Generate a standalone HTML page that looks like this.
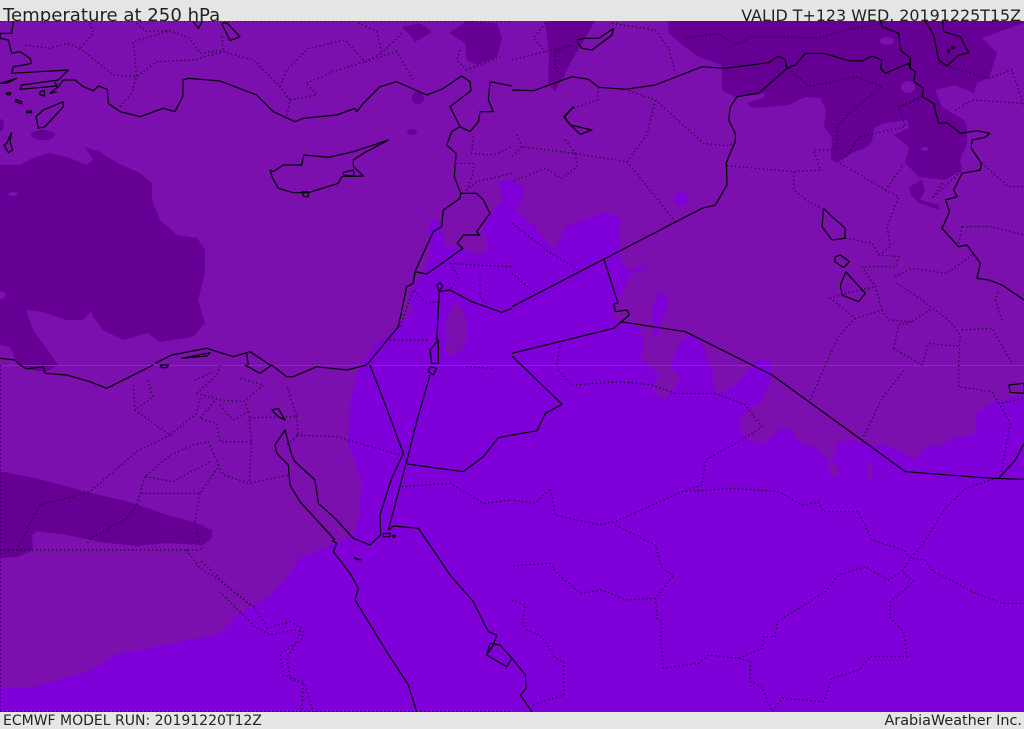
<!DOCTYPE html>
<html><head><meta charset="utf-8"><style>
html,body{margin:0;padding:0;width:1024px;height:729px;overflow:hidden;background:#e5e5e5}
.t{position:absolute;font-family:"DejaVu Sans",sans-serif;color:#222;white-space:nowrap;line-height:1}
svg{position:absolute;left:0;top:0}
polyline{fill:none;stroke:#000;stroke-width:1.2;stroke-linejoin:round;vector-effect:non-scaling-stroke}
.d polyline{stroke:#14002a;stroke-width:1.2;stroke-dasharray:1.2 2.8;stroke-linecap:butt}
</style></head><body>
<div style="position:absolute;left:0;top:0;width:1024px;height:21px;overflow:hidden">
<div class="t" style="left:3px;top:7px;font-size:18.1px">Temperature at 250 hPa</div>
<div class="t" style="right:3px;top:8px;font-size:15.9px">VALID T+123 WED. 20191225T15Z</div>
</div>
<svg width="1024" height="729" viewBox="0 0 1024 729">
<defs><clipPath id="c"><rect x="0" y="21" width="1024" height="691"/></clipPath></defs>
<g clip-path="url(#c)">
<rect x="0" y="21" width="1024" height="691" fill="#7b10ae"/>
<g fill="#660094">
<path d="M0 165L20 165L33 158L50 153L70 158L87 165L93 160L85 147L100 152L117 163L140 173L152 183L152 200L160 220L177 235L197 238L205 250L205 273L198 300L205 323L193 337L160 342L147 333L123 340L103 330L93 317L91 312L83 320L67 320L43 312L26 310L33 330L58 365L45 372L33 370L20 365L15 358L10 347L0 345Z"/>
<path d="M0 471L43 480L87 492L133 503L167 515L197 523L212 530L212 538L203 545L167 543L137 546L100 542L67 535L37 531L32 535L33 550L17 557L0 558Z"/>
<path d="M668 21L669 33L685 47L699 57L722 65L722 90L735 97L765 93L764 98L747 103L752 108L789 105L805 97L820 98L826 110L824 127L832 138L831 160L837 163L852 153L865 148L872 142L874 128L885 123L907 120L909 128L894 135L909 147L905 163L919 177L945 180L962 170L960 160L967 143L967 127L964 120L942 107L935 90L955 85L974 93L977 83L989 78L997 53L982 38L995 33L1024 23L1024 21Z"/>
<path d="M909 187L922 180L925 190L920 200L939 205L939 210L919 203L911 195Z"/>
<path d="M545 21L595 21L584 40L572 60L564 75L555 91L548 83L549 53Z"/>
<path d="M402 27L420 23L432 32L415 42L410 35Z"/>
<path d="M449 33L467 21L497 23L502 38L497 57L477 65L467 60L465 43Z"/>
<ellipse cx="418" cy="98" rx="6" ry="6"/><ellipse cx="412" cy="132" rx="5" ry="3"/><ellipse cx="43" cy="135" rx="12" ry="5"/>
<ellipse cx="1" cy="125" rx="3" ry="6"/>
</g>
<g fill="#7b10ae">
<ellipse cx="887" cy="41" rx="7" ry="4"/><ellipse cx="908" cy="87" rx="7" ry="6"/><ellipse cx="925" cy="149" rx="4" ry="2"/><ellipse cx="13" cy="194" rx="5" ry="2"/><ellipse cx="1" cy="295" rx="5" ry="4"/>
</g>
<path fill="#7f00d8" d="M0 688L33 687L67 677L90 671L113 655L150 648L187 640L217 635L227 625L240 613L267 598L283 582L300 558L330 545L353 537L359 518L362 482L348 445L350 405L358 368L360 365L377 343L397 328L413 310L408 293L425 273L430 253L430 220L438 220L445 245L480 255L489 248L482 230L490 213L503 200L498 182L512 180L522 187L524 193L517 207L517 213L534 225L545 240L554 249L560 240L565 227L589 218L605 212L619 217L620 260L629 270L652 265L629 275L625 287L614 310L612 317L619 322L640 327L644 343L640 357L649 365L659 375L652 390L664 400L677 385L680 378L669 365L670 365L682 340L692 335L702 343L709 365L712 365L714 390L725 393L742 378L752 365L762 358L772 362L770 385L760 402L742 415L740 425L747 440L765 443L779 430L790 428L799 442L815 447L830 460L829 473L835 477L840 470L832 460L837 443L849 440L875 445L892 447L914 459L927 447L942 445L955 438L977 433L975 415L992 402L1024 395L1024 712L0 712Z"/>
<path fill="#7b10ae" d="M445 322L455 302L463 310L467 330L465 347L452 356L445 350Z"/>
<path fill="#7b10ae" d="M867 463L870 461L873 470L872 480L869 478Z"/>
<path fill="#7f00d8" d="M652 310L658 293L665 293L668 305L660 322L658 340L654 335Z"/>
<circle cx="681" cy="199" r="7" fill="#7f00d8"/>
<rect x="0" y="365" width="1024" height="1" fill="#8c2fc4" opacity=".8"/>

<g transform="scale(.33333)">
<polyline points="40,63 35,100 0,100 0,115 25,120 35,160 60,155 90,175 95,190 70,195 40,200 35,220 205,210 175,240 65,255 60,268 170,258 165,245"/>
<polyline points="190,240 225,240 250,260 280,272 295,258 322,268 325,310 360,335 400,345 420,350 490,325 525,335 548,290 550,240 565,235 660,243 770,285 820,335 885,365 910,355 1010,345 1065,325 1070,335 1090,310 1140,260 1190,245 1280,285 1325,268 1385,228 1410,245 1413,272 1350,320 1380,380 1355,395 1340,435 1368,460 1363,530 1382,580 1380,595 1330,630 1325,680 1300,695 1245,815 1240,850 1220,860 1195,980 1100,1095"/>
<polyline points="190,240 175,260 150,280 170,275"/>
<polyline points="0,250 50,235 20,250 0,250"/>
<polyline points="20,278 32,278 30,284 20,284 20,278"/>
<polyline points="47,298 65,305 65,312 47,305 47,298"/>
<polyline points="80,333 95,333 95,338 80,338 80,333"/>
<polyline points="120,275 133,272 133,288 120,284 120,275"/>
<polyline points="190,305 130,330 108,350 115,385 135,380 190,320 190,305"/>
<polyline points="35,397 20,430 12,435 25,458 38,450 30,425 35,397"/>
<polyline points="665,70 680,68 720,110 690,122 665,70"/>
<polyline points="580,65 595,85 607,65"/>
<polyline points="810,510 820,515 850,495 905,495 912,465 985,472 1060,455 1165,420 1090,460 1060,480 1060,500 1090,528 1025,530 1015,550 925,578 880,578 835,565 818,535 810,510"/>
<polyline points="905,575 925,575 925,590 912,590 905,575"/>
<polyline points="1030,517 1060,510 1062,528 1030,525 1030,517"/>
<polyline points="1470,245 1536,258"/>
<polyline points="1470,245 1465,300 1480,335 1440,335 1435,365 1410,395 1380,380"/>
<polyline points="1382,580 1430,580 1450,600 1470,640 1430,695 1440,705 1390,705 1372,730 1388,745 1340,780 1280,822 1245,815"/>
<polyline points="1318,875 1350,870 1415,905 1505,937 1536,925"/>
<polyline points="1318,875 1310,855 1320,848 1328,858 1318,875 1310,1020"/>
<polyline points="1290,1050 1315,1020 1315,1090 1295,1090 1290,1050"/>
<polyline points="465,1090 515,1065 620,1045 700,1070 750,1055 810,1095"/>
<polyline points="545,1075 630,1058 620,1068 545,1075"/>
<polyline points="740,1060 745,1095"/>
<polyline points="60,1095 45,1080 0,1075"/>
</g>

<g transform="translate(512 0) scale(.33333)">
<polyline points="0,270 65,272 180,230 230,238 260,262 340,268 430,255 570,200 640,205 770,188 800,168 820,180 825,205 850,195 880,160 935,160 1010,182 1050,183 1080,168 1110,180 1105,205 1120,220 1190,190 1195,205 1210,215 1205,245 1235,265 1230,290 1265,310 1280,370 1305,368 1345,400 1395,392 1433,400 1420,412 1380,420 1378,445 1408,490 1405,510 1350,520 1325,570 1335,590 1300,600 1313,635 1290,685 1340,740 1365,735 1405,790 1395,835 1430,840 1470,855 1536,900"/>
<polyline points="825,205 740,280 675,290 655,320 650,360 670,400 670,425 650,470 643,490 645,555 610,615 570,625 0,920"/>
<polyline points="275,775 318,910 305,912 310,935 345,930 352,945 305,985 0,1060"/>
<polyline points="325,965 520,995 720,1095"/>
<polyline points="0,1068 28,1095"/>
<polyline points="1105,63 1110,80 1160,100 1165,150 1195,175 1195,205"/>
<polyline points="1240,63 1265,105 1280,180 1305,198 1340,165 1370,158 1345,110 1295,95 1292,63"/>
<polyline points="1305,150 1312,150 1310,160 1305,150"/>
<polyline points="1318,138 1330,143 1320,146 1318,138"/>
<polyline points="195,120 220,115 260,115 305,85 300,105 240,150 210,145 195,125"/>
<polyline points="185,320 158,350 175,375 240,390 205,403 170,370 155,350 185,320"/>
<polyline points="935,625 930,680 960,720 998,715 1000,685 960,650 935,625"/>
<polyline points="970,770 985,765 1012,785 995,803 968,785 970,770"/>
<polyline points="1002,815 985,855 990,885 1040,905 1060,880 1010,825 1002,815"/>
</g>

<g transform="translate(0 365) scale(.33333)">
<polyline points="460,0 400,30 320,70 270,50 200,30 135,25 130,5 80,12 60,0"/>
<polyline points="1100,0 1040,15 950,5 880,35 860,35 815,0 780,25 735,0"/>
<polyline points="1110,0 1160,130 1210,265 1175,340 1140,450 1142,510 1110,540 1060,520 1005,460 955,415 945,345 885,290 875,270 855,195 825,240 830,265 865,300 870,360 900,410 1005,525"/>
<polyline points="995,525 1010,535 1000,560 1050,625 1075,670 1065,705 1160,860 1225,960 1250,1040"/>
<polyline points="1165,495 1180,483 1255,490 1310,570 1350,630 1420,710 1465,800 1490,810 1480,840 1460,870 1520,905 1536,880 1500,840 1470,835 1460,870"/>
<polyline points="1165,495 1225,270 1250,170 1290,30"/>
<polyline points="1290,5 1310,10 1300,30 1285,20 1290,5"/>
<polyline points="815,135 835,130 855,165 835,155 815,135"/>
<polyline points="1150,505 1170,505 1170,515 1150,515 1150,505"/>
<polyline points="1178,510 1188,512 1180,518 1178,510"/>
<polyline points="1062,578 1082,585 1070,583 1062,578"/>
<polyline points="1536,210 1495,218 1450,275 1390,320 1222,297"/>
<polyline points="480,0 505,0 500,8 485,8 480,0"/>
</g>

<g transform="translate(512 365) scale(.33333)">
<polyline points="28,0 150,118 100,145 75,197 0,210"/>
<polyline points="720,0 780,30 1180,320 1440,340 1536,343"/>
<polyline points="1465,335 1510,285 1536,235"/>
<polyline points="0,880 40,930 42,970 25,990 60,1040"/>
<polyline points="1490,60 1536,55 1536,85 1495,82 1490,60"/>
</g>

<g class="d">
<g transform="scale(.33333)">
<polyline points="0,63 1536,63"/>
<polyline points="75,135 150,145 200,130 240,145 340,225 410,230 400,125 510,92 570,115 600,160 670,150 665,100"/>
<polyline points="360,320 395,280 410,230 470,185 580,180 670,155 760,180 840,260 870,300 860,350"/>
<polyline points="840,260 860,210 925,145 1035,120 1095,185 1190,155 1240,240"/>
<polyline points="920,250 1000,215 1095,185"/>
<polyline points="870,300 950,285 920,250"/>
<polyline points="1095,185 1145,160 1130,95 1070,65"/>
<polyline points="1205,100 1145,160"/>
<polyline points="270,70 280,100 240,145"/>
<polyline points="410,70 440,95 510,92"/>
<polyline points="1380,150 1370,180 1400,210 1500,170"/>
<polyline points="1420,410 1415,460 1480,465 1536,440"/>
<polyline points="1370,490 1420,490 1420,520 1400,570 1430,545 1536,520"/>
<polyline points="1350,790 1375,830 1350,870"/>
<polyline points="1350,790 1420,795 1536,800"/>
<polyline points="1440,830 1440,890 1465,915"/>
<polyline points="1200,980 1240,870 1280,910 1320,905"/>
<polyline points="1170,1020 1290,1020"/>
</g>
<g transform="translate(512 0) scale(.33333)">
<polyline points="0,180 100,155 180,135 130,155 130,210 160,230"/>
<polyline points="100,70 65,115 100,155"/>
<polyline points="300,70 430,90 470,145 490,220"/>
<polyline points="520,115 620,100 670,135 720,110 810,110 920,115 1000,90 1110,70"/>
<polyline points="830,205 890,260 1030,230 1110,260 1010,340 975,380 975,450 905,450 925,510 845,515 645,497"/>
<polyline points="1230,290 1160,320 1180,380 1045,410 1000,470"/>
<polyline points="260,262 255,300 185,325"/>
<polyline points="340,268 430,300 575,430 650,437 670,425"/>
<polyline points="430,300 405,405 345,485 200,462 30,440 0,470"/>
<polyline points="345,485 490,665"/>
<polyline points="190,460 195,500 150,535 100,505 0,545"/>
<polyline points="15,405 30,440"/>
<polyline points="160,420 190,460"/>
<polyline points="845,515 845,570 890,605 930,625"/>
<polyline points="985,490 1120,570 1170,500"/>
<polyline points="1120,570 1160,590 1125,680 1135,740 1100,765"/>
<polyline points="1000,715 1080,730 1100,765 1160,770 1150,800 1050,800 1090,860 1110,930 1030,955 955,895 1000,880 1090,860"/>
<polyline points="1150,830 1200,805 1305,820 1380,765"/>
<polyline points="1350,680 1440,680 1536,705"/>
<polyline points="1350,680 1340,730"/>
<polyline points="1155,850 1230,900 1260,925 1310,960 1345,1005 1340,1095"/>
<polyline points="1110,930 1130,960 1200,965 1260,925"/>
<polyline points="1350,990 1440,985 1500,1090"/>
<polyline points="1470,960 1450,900 1460,870"/>
<polyline points="1145,1045 1160,975 1200,965"/>
<polyline points="1145,1045 1230,1095 1250,1030 1345,1040"/>
<polyline points="1030,955 980,1010 940,1095"/>
<polyline points="0,670 110,755 200,810"/>
<polyline points="0,820 70,880"/>
<polyline points="145,1030 135,1095"/>
<polyline points="1410,490 1490,560 1536,560"/>
<polyline points="1290,550 1260,595 1350,510"/>
<polyline points="1330,330 1380,300 1536,310"/>
<polyline points="1280,190 1430,235 1500,210 1536,320"/>
<polyline points="1170,320 1220,295"/>
</g>
<g transform="translate(0 365) scale(.33333)">
<polyline points="1,0 1,1040"/>
<polyline points="400,60 405,135 460,95 440,40"/>
<polyline points="405,135 510,210 590,145 600,100"/>
<polyline points="510,210 410,260 270,380 120,420 50,555"/>
<polyline points="590,85 660,105 730,110 790,60 720,40"/>
<polyline points="590,85 650,30 660,0"/>
<polyline points="585,45 640,20"/>
<polyline points="650,100 600,160 650,175 660,230 755,230"/>
<polyline points="660,120 700,165 745,140 735,110"/>
<polyline points="745,140 755,230 748,350"/>
<polyline points="750,158 890,155 860,60"/>
<polyline points="890,155 895,210 860,240"/>
<polyline points="655,300 670,330 748,355 865,330"/>
<polyline points="655,300 625,230 580,240 510,270 435,335 520,350 630,290"/>
<polyline points="435,335 410,420 380,460 270,520 260,540"/>
<polyline points="425,385 600,385 655,305"/>
<polyline points="600,385 585,470 605,560"/>
<polyline points="0,555 600,555"/>
<polyline points="560,555 600,610 650,640 760,725 800,780"/>
<polyline points="605,590 700,680 750,720"/>
<polyline points="660,680 720,740 765,785 810,810 880,795 910,800 905,825 840,865 850,930 910,950 905,1040"/>
<polyline points="800,790 870,770 905,790 880,850 860,880 870,940 915,960 940,1040"/>
<polyline points="890,210 1010,215 1200,270"/>
<polyline points="1205,365 1350,355 1450,415 1536,405"/>
<polyline points="1400,5 1480,10"/>
<polyline points="0,1040 1536,1040"/>
</g>
<g transform="translate(512 365) scale(.33333)">
<polyline points="140,15 180,60 320,50 420,60 490,85 610,85 700,120 750,185 690,225 580,285 570,360 510,380 310,470 260,480 130,450 115,370 70,415 0,405"/>
<polyline points="510,380 670,370 800,380 870,420 920,412 935,440 1040,440 1080,525 1175,555 1195,580 1240,585 1265,620 1345,660 1380,680 1470,715 1536,715"/>
<polyline points="1465,335 1360,370 1300,430 1220,555 1195,580 1170,620 1205,650 1135,710 1135,760 1175,800 1185,875 1075,875 1040,915 960,940 935,1010 810,1000 780,1040"/>
<polyline points="310,480 430,540 450,610 485,630 430,700 435,760 450,770 445,820 455,910 560,895 590,870 680,880 750,850 755,815 790,815 795,770 940,680 980,630 1060,605 1130,645 1170,620"/>
<polyline points="430,700 340,705 270,675 205,685 130,620 115,595 30,600 0,605"/>
<polyline points="680,880 715,890 715,950 750,965 780,1040"/>
<polyline points="0,705 40,720 30,770 45,795 90,815 130,880 155,890 155,990 60,1020"/>
<polyline points="895,105 940,0"/>
<polyline points="1050,225 1110,100 1180,10"/>
<polyline points="1340,0 1340,65 1440,80 1495,175 1465,335"/>
<polyline points="1470,115 1536,100"/>
</g>
</g>
</g>
</svg>
<div class="t" style="left:3px;top:714px;font-size:14px">ECMWF MODEL RUN: 20191220T12Z</div>
<div class="t" style="right:2px;top:714px;font-size:14.4px">ArabiaWeather Inc.</div>
</body></html>
